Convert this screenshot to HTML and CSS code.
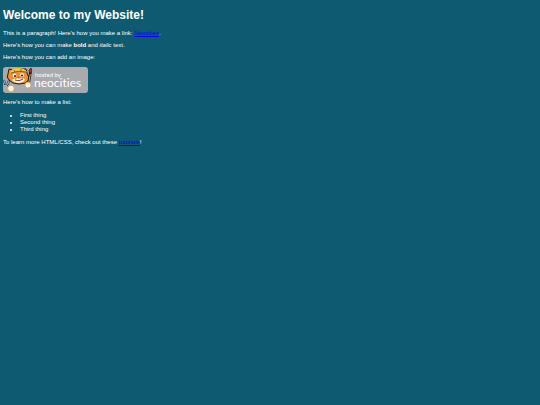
FILE: index.html
```html
<!DOCTYPE html>
<html lang="en">
<head>
    <meta charset="UTF-8">
    <meta name="viewport" content="width=device-width, initial-scale=1.0">
    <title>My Website</title>
    <link rel="stylesheet" href="styles.css">
</head>
<body>
    <h1>Welcome to my Website!</h1>

    <p>This is a paragraph! Here's how you make a link: <a href="https://neocities.org">Neocities</a>.</p>

    <p>Here's how you can make <strong>bold</strong> and <em>italic</em> text.</p>

    <p>Here's how you can add an image:</p>
    <svg class="site-button" viewBox="0 0 85 26" role="img" aria-label="Hosted by Neocities">
        <rect class="plate" x="0" y="0" width="85" height="26" rx="3"/>
        <!-- fork and paw -->
        <path d="M4 16l4 7M1 13l1 4 3 0 1-4" fill="none" stroke="#1b2b3b" stroke-width="2"/>
        <path d="M4 16l4 7M1 13l1 4 3 0 1-4" fill="none" stroke="#8cb4d8" stroke-width="1"/>
        <!-- cat head -->
        <path d="M5 7l1-5 4 1Q15 0 20 2l3 0 1 4q3 4 1 8-3 3-9 3-7 0-10-4Q3 10 5 7z" fill="#ee8f35" stroke="#231b18" stroke-width="1"/>
        <path d="M7 6q1-5 8-5 6-.5 9 4-8-2-17 1z" fill="#f3c84b"/>
        <path d="M8 6q7-3 15-1M11 3l1 2M18 2v2" fill="none" stroke="#6b4a1c" stroke-width=".8"/>
        <path d="M9 13q2-2 4-1 2-1.500 4-.5 3-1 5 1-1 3-6 3.500-5 0-7-3z" fill="#fff0dc"/>
        <ellipse cx="11.500" cy="8.500" rx="1.800" ry="2" fill="#fff"/>
        <ellipse cx="19" cy="8" rx="1.800" ry="2" fill="#fff"/>
        <circle cx="12" cy="9" r="1" fill="#17171b"/>
        <circle cx="19" cy="8.500" r="1" fill="#17171b"/>
        <path d="M14 10.500l3-.5-1.200 1.500z" fill="#b84236"/>
        <path d="M12 13q4 2 8-1" fill="none" stroke="#382019" stroke-width=".8"/>
        <!-- brush and paw -->
        <path d="M27.500 5l-2 12" stroke="#231b18" stroke-width="2.600"/>
        <path d="M27.300 7l-1.800 10" stroke="#d9b04e" stroke-width="1"/>
        <path d="M26.500 6q-1.500-3 1.500-5 1.500 3 0 5z" fill="#c9322d" stroke="#231b18" stroke-width=".8"/>
        <circle cx="8" cy="21.500" r="3.200" fill="#fff5e4" stroke="#e49a47" stroke-width=".8"/>
        <circle cx="25" cy="18" r="3" fill="#fff5e4" stroke="#e49a47" stroke-width=".8"/>
        <text class="hosted" x="32" y="10">hosted by</text>
        <text class="brand" x="31" y="20">neocities</text>
    </svg>

    <p>Here's how to make a list:</p>

    <ul>
        <li>First thing</li>
        <li>Second thing</li>
        <li>Third thing</li>
    </ul>

    <p>To learn more HTML/CSS, check out these <a href="https://neocities.org/tutorials">tutorials</a>!</p>
</body>
</html>
```
FILE: styles.css
```css
body {
    margin: 9px 3px;
    background-color: #0e5b71;
    color: white;
    font-family: "Liberation Sans", Arial, sans-serif;
    font-size: 6px;
    line-height: 7px;
}

h1 {
    margin: 0 0 8px;
    font-size: 12px;
    line-height: 13px;
}

p {
    margin: 5px 0;
}

a {
    color: #0000ee;
}

ul {
    margin: 6px 0;
    padding-left: 17px;
}

.site-button {
    display: block;
    width: 85px;
    height: 26px;
    margin: 6px 0;
}

.plate {
    fill: #a9aaad;
}

.hosted,
.brand {
    fill: white;
    font-family: Lato, sans-serif;
    font-variant-ligatures: none;
}

.hosted {
    font-size: 6px;
}

.brand {
    font-size: 12px;
}
```
